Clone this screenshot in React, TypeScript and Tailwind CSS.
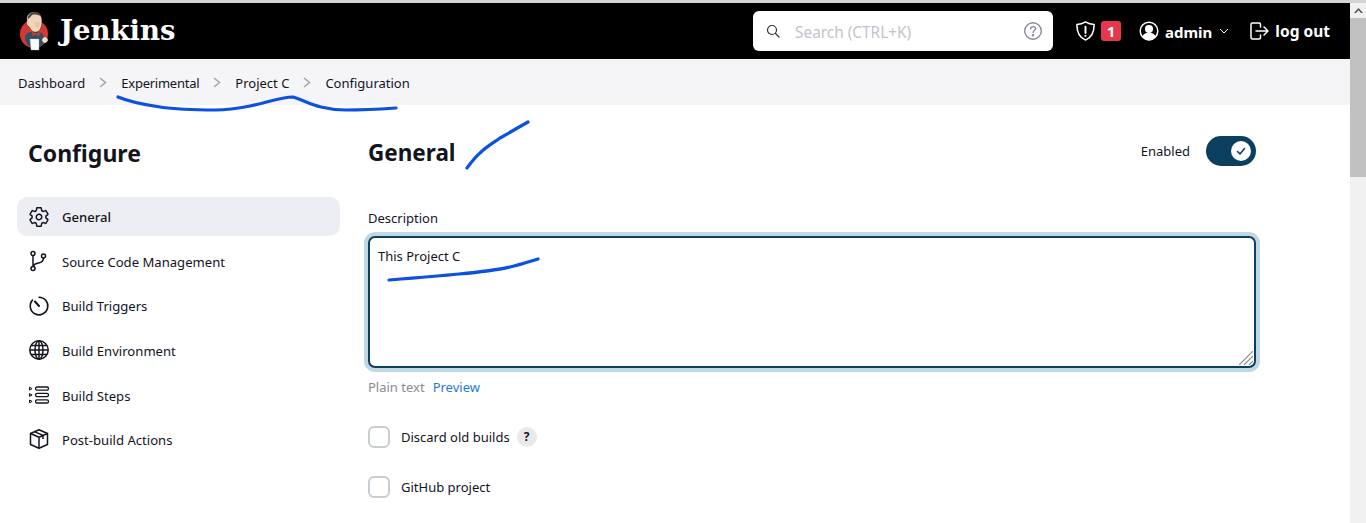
import React from 'react'

const font = { fontFamily: '"Noto Sans", sans-serif' }

function Logo() {
  return (
    <svg width="32" height="40" viewBox="0 0 32 40" className="shrink-0">
      <circle cx="16" cy="23" r="14" fill="#d33833" />
      <path d="M7 26c.5-3 3-5 7-5h6c4 0 6 3 6 7l-1 6-5 3h-6c-4-2-7-6-7-11z" fill="#335061" />
      <path d="M9 9C8 4 12 1 16 1c5 0 8 4 8 9 0 4-1 8-3 10-2 1.500-5 1.500-7 0-1.500-1.500-2-3-3-4.500-2 0-3-3-2-6.500z" fill="#f0d6b7" stroke="#231f20" strokeWidth=".5" />
      <path d="M10 8c-.5-4 3-7 7-7 3 0 5 1 6 4-3-1-6-2-9-1-1 1-2 3-4 4z" fill="#4a4545" />
      <path d="M17 11c2 0 4 .5 5 1-1 3-1.500 4-2.500 5-1.500-1-2.500-3-2.500-6z" fill="#e8c4a0" />
      <path d="M14 21l4 1.500 4-1.500-.5 4-3.500-1.300L14.500 25z" fill="#d33833" />
      <path d="M12 28h9v11h-8z" fill="#fff" stroke="#9aa" strokeWidth=".4" />
      <circle cx="27" cy="29" r="2.300" fill="#f0d6b7" stroke="#fff" />
    </svg>
  )
}

function GearIcon() {
  return (
    <svg width="22" height="22" viewBox="0 0 512 512" fill="none" stroke="currentColor" strokeWidth="34" strokeLinecap="round" strokeLinejoin="round">
      <path d="M262.29 192.31a64 64 0 1057.4 57.4 64.13 64.13 0 00-57.4-57.4zM416.39 256a154.34 154.34 0 01-1.53 20.79l45.21 35.46a10.81 10.81 0 012.45 13.75l-42.77 74a10.81 10.81 0 01-13.14 4.59l-44.9-18.08a16.11 16.11 0 00-15.17 1.75A164.48 164.48 0 01325 400.8a15.94 15.94 0 00-8.82 12.14l-6.73 47.89a11.08 11.08 0 01-10.68 9.17h-85.54a11.11 11.11 0 01-10.69-8.87l-6.72-47.82a16.07 16.07 0 00-9-12.22 155.3 155.3 0 01-21.46-12.57 16 16 0 00-15.11-1.71l-44.89 18.07a10.81 10.81 0 01-13.14-4.58l-42.77-74a10.8 10.8 0 012.45-13.75l38.21-30a16.05 16.05 0 006-14.08c-.36-4.17-.58-8.33-.58-12.5s.21-8.27.58-12.35a16 16 0 00-6.07-13.94l-38.19-30A10.81 10.81 0 0149.48 186l42.77-74a10.81 10.81 0 0113.14-4.59l44.9 18.08a16.11 16.11 0 0015.17-1.75A164.48 164.48 0 01187 111.2a15.94 15.94 0 008.82-12.14l6.73-47.89A11.08 11.08 0 01213.23 42h85.54a11.11 11.11 0 0110.69 8.87l6.72 47.82a16.07 16.07 0 009 12.22 155.3 155.3 0 0121.46 12.57 16 16 0 0015.11 1.71l44.89-18.07a10.81 10.81 0 0113.14 4.58l42.77 74a10.8 10.8 0 01-2.45 13.75l-38.21 30a16.05 16.05 0 00-6.05 14.08c.33 4.14.55 8.3.55 12.47z" />
    </svg>
  )
}

function BranchIcon() {
  return (
    <svg width="22" height="22" viewBox="0 0 22 22" fill="none" stroke="currentColor" strokeWidth="1.500" strokeLinecap="round">
      <circle cx="5" cy="3.500" r="2" />
      <circle cx="5" cy="18.500" r="2" />
      <circle cx="15.500" cy="6" r="2" />
      <path d="M5 5.500v11M15.500 8c0 3-2 4.500-5 5s-4.500 1.500-5.500 3.500" />
    </svg>
  )
}

function TimerIcon() {
  return (
    <svg width="22" height="22" viewBox="0 0 22 22" fill="none" stroke="currentColor" strokeWidth="1.600" strokeLinecap="round">
      <path d="M11 2.200a8.800 8.800 0 11-6.500 2.900" />
      <path d="M7 6.500l4 4.500" strokeWidth="2" />
    </svg>
  )
}

function GlobeIcon() {
  return (
    <svg width="22" height="22" viewBox="0 0 22 22" fill="none" stroke="currentColor" strokeWidth="1.500">
      <circle cx="11" cy="11" r="9.200" />
      <ellipse cx="11" cy="11" rx="4" ry="9.200" />
      <path d="M11 2v18M2 11h18M3.200 6.500h15.600M3.200 15.500h15.600" />
    </svg>
  )
}

function StepsIcon() {
  return (
    <svg width="22" height="22" viewBox="0 0 22 22" fill="none" stroke="currentColor" strokeWidth="1.300">
      <rect x="7.500" y="3" width="13" height="3.200" rx="1.600" />
      <rect x="7.500" y="9.400" width="13" height="3.200" rx="1.600" />
      <rect x="7.500" y="15.800" width="13" height="3.200" rx="1.600" />
      <path d="M1.500 3.200l2.600 1.400-2.600 1.400zM1.500 9.600l2.600 1.400-2.600 1.400zM1.500 16l2.600 1.400-2.600 1.400z" strokeWidth="1" strokeLinejoin="round" />
    </svg>
  )
}

function BoxIcon() {
  return (
    <svg width="22" height="22" viewBox="0 0 22 22" fill="none" stroke="currentColor" strokeWidth="1.500" strokeLinejoin="round">
      <path d="M11 1.800l8.500 3.700v11L11 20.200l-8.500-3.700v-11z" />
      <path d="M2.500 5.500L11 9.200l8.500-3.700M11 9.200v11M6.500 3.600L15 7.400v3.600" />
    </svg>
  )
}

const navItems = [
  { label: 'General', icon: <GearIcon />, active: true },
  { label: 'Source Code Management', icon: <BranchIcon /> },
  { label: 'Build Triggers', icon: <TimerIcon /> },
  { label: 'Build Environment', icon: <GlobeIcon /> },
  { label: 'Build Steps', icon: <StepsIcon /> },
  { label: 'Post-build Actions', icon: <BoxIcon /> },
]

function Chevron() {
  return (
    <svg width="8" height="11" viewBox="0 0 8 11" fill="none" stroke="#a3a3ad" strokeWidth="1.500">
      <path d="M1 1l5.500 4.500L1 10" />
    </svg>
  )
}

function Header() {
  return (
    <header className="flex h-[56px] items-center bg-black pl-[18px] text-white">
      <Logo />
      <span className="ml-[10px] w-[115px] text-[27.500px] leading-none font-bold" style={{ fontFamily: '"DejaVu Serif", serif' }}>
        Jenkins
      </span>
      <div className="ml-[578px] flex h-[40px] w-[300px] items-center rounded-md bg-white pr-[10px] pl-[13px]">
        <svg width="14" height="14" viewBox="0 0 14 14" fill="none" stroke="#333" strokeWidth="1.200" strokeLinecap="round">
          <circle cx="6" cy="6" r="4.500" />
          <path d="M9.500 9.500l3.500 3.500" />
        </svg>
        <span className="ml-[15px] flex-1 pt-[4px] text-[15.400px] text-[#c3c3cc]">Search (CTRL+K)</span>
        <svg width="20" height="20" viewBox="0 0 20 20" fill="none" stroke="#8a8a9a" strokeWidth="1.400">
          <circle cx="10" cy="10" r="8.300" />
          <path d="M7.600 8c0-1.500 1.100-2.400 2.500-2.400s2.400 1 2.400 2.100c0 1.800-2.400 1.900-2.400 3.700" strokeLinecap="round" />
          <circle cx="10" cy="14.200" r=".6" fill="#8a8a9a" />
        </svg>
      </div>
      <svg className="ml-[21px]" width="23" height="24" viewBox="0 0 24 24" fill="none" stroke="#fff" strokeWidth="1.600" strokeLinejoin="round">
        <path d="M12 2.500c3 1.800 6 2.600 9 2.800 0 8-2 13.500-9 16.200C5 18.800 3 13.300 3 5.300c3-.2 6-1 9-2.800z" />
        <path d="M12 7.500v6.500" strokeWidth="2" strokeLinecap="round" />
        <circle cx="12" cy="17" r="1.100" fill="#fff" stroke="none" />
      </svg>
      <span className="ml-[4px] flex h-[20px] w-[20px] items-center justify-center rounded-[3px] bg-[#e6374d] text-[15px] font-bold">1</span>
      <svg className="ml-[18px]" width="20" height="20" viewBox="0 0 20 20" fill="none" stroke="#fff" strokeWidth="1.500">
        <circle cx="10" cy="10" r="8.800" />
        <circle cx="10" cy="8" r="3.300" fill="#fff" />
        <path d="M4 15.500c1.500-2.500 3.500-3 6-3s4.500.5 6 3c-1.500 2-3.500 3.300-6 3.300s-4.500-1.300-6-3.300z" fill="#fff" />
      </svg>
      <span className="ml-[6px] pt-[2px] text-[15px] font-bold">admin</span>
      <svg className="ml-[7px]" width="10" height="10" viewBox="0 0 10 10" fill="none" stroke="#fff" strokeWidth="1">
        <path d="M1 3l4 4 4-4" />
      </svg>
      <svg className="ml-[20px]" width="20" height="20" viewBox="0 0 20 20" fill="none" stroke="#fff" strokeWidth="1.500" strokeLinecap="round" strokeLinejoin="round">
        <path d="M11.500 6V3.500a1.500 1.500 0 00-1.500-1.500H3.500A1.500 1.500 0 002 3.500v13A1.500 1.500 0 003.500 18H10a1.500 1.500 0 001.500-1.500V14" />
        <path d="M7 10h12M15 6l4 4-4 4" />
      </svg>
      <span className="ml-[6px] pt-[2px] text-[15.500px] font-bold">log out</span>
    </header>
  )
}

function Breadcrumbs() {
  const crumbs = ['Dashboard', 'Experimental', 'Project C', 'Configuration']
  return (
    <nav className="flex h-[46px] items-center gap-[14px] bg-[#f5f5f7] pl-[18px] text-[13px] text-[#14141f]">
      {crumbs.map((c, i) => (
        <React.Fragment key={c}>
          {i > 0 && <Chevron />}
          <span className={`pt-[4px] ${c === 'Experimental' ? 'tracking-[-0.25px]' : ''}`}>{c}</span>
        </React.Fragment>
      ))}
    </nav>
  )
}

function Sidebar() {
  return (
    <aside className="w-[340px] shrink-0 pt-[31px] pl-[17px]">
      <h1 className="pl-[11px] text-[23px] leading-[34px] font-bold text-[#14141f]">Configure</h1>
      <ul className="mt-[27px] flex flex-col gap-[5.600px]">
        {navItems.map(item => (
          <li
            key={item.label}
            className={`flex h-[39px] items-center gap-[12px] rounded-[10px] pl-[11px] text-[13.100px] text-[#14141f] ${item.active ? 'bg-[#edeef3] font-medium' : ''}`}
          >
            {item.icon}
            <span className="pt-[3px]">{item.label}</span>
          </li>
        ))}
      </ul>
    </aside>
  )
}

function Checkbox({ label, help }: { label: string; help?: boolean }) {
  return (
    <label className="flex items-center text-[13px] text-[#14141f]">
      <span className="h-[22px] w-[22px] rounded-[6px] border-2 border-[#c6ced3] bg-white" />
      <span className="ml-[11px] pt-[2px]">{label}</span>
      {help && (
        <span className="ml-[7px] flex h-[20px] w-[20px] items-center justify-center rounded-full bg-[#e9e9ec] text-[12px] font-bold">?</span>
      )}
    </label>
  )
}

function General() {
  return (
    <main className="ml-[28px] w-[888px] pt-[31px]">
      <div className="flex items-start justify-between">
        <h2 className="pt-[1px] text-[22.500px] leading-[32px] font-bold text-[#14141f]">General</h2>
        <div className="flex items-center gap-[16px] text-[13px] text-[#14141f]">
          <span className="pt-[2px]">Enabled</span>
          <span className="flex h-[30px] w-[50px] items-center justify-end rounded-full bg-[#0b3f5f] pr-[5px]">
            <span className="flex h-[20px] w-[20px] items-center justify-center rounded-full bg-white">
              <svg width="12" height="12" viewBox="0 0 12 12" fill="none" stroke="#0b3f5f" strokeWidth="1.600" strokeLinecap="round" strokeLinejoin="round">
                <path d="M2.500 6.500l2.500 2.500 4.500-5.500" />
              </svg>
            </span>
          </span>
        </div>
      </div>
      <div className="mt-[39px] text-[13px] leading-[20px] text-[#14141f]">Description</div>
      <div className="relative mt-[8px]">
        <textarea
          readOnly
          defaultValue="This Project C"
          className="block h-[132px] w-full resize-none rounded-[7px] border-2 border-[#0b3f5f] bg-white px-[8px] pt-[8px] pb-[6px] text-[13px] leading-[20px] text-[#14141f] shadow-[0_0_0_4px_#c0d7e6] outline-none"
          style={font}
        />
        <svg className="absolute right-[3px] bottom-[3px]" width="14" height="14" viewBox="0 0 14 14" stroke="#8c8c8c" strokeWidth="1.200">
          <path d="M0 14L14 0M5 14l9-9M10 14l4-4" />
        </svg>
      </div>
      <div className="mt-[9px] flex gap-[8px] text-[13px] leading-[20px]">
        <span className="text-[#8a8a96]">Plain text</span>
        <span className="text-[#1f78e0]">Preview</span>
      </div>
      <div className="mt-[29px] flex flex-col gap-[28px]">
        <Checkbox label="Discard old builds" help />
        <Checkbox label="GitHub project" />
      </div>
    </main>
  )
}

function Scribbles() {
  return (
    <svg className="pointer-events-none absolute top-0 left-0" width="1366" height="523" fill="none" stroke="#0b52e0" strokeWidth="3.200" strokeLinecap="round" strokeLinejoin="round">
      <path d="M118 97c12 5 28 8 42 10 20 3 38 3 55 3 15 0 25-2 35-4 16-3 30-9 43-9 10 3 18 8 28 10 8 2 17 3 25 3 20 0 35-1 50-2" />
      <path d="M467 168c3-4 8-11 13-15 6-6 13-10 20-15 9-5 19-11 28-16" />
      <path d="M389 280c25-2 50-4 70-6 22-2 40-4 55-8 9-2 17-5 24-7" />
    </svg>
  )
}

export default function App() {
  return (
    <div className="relative flex h-[523px] w-[1366px] overflow-hidden bg-white" style={font}>
      <div className="min-w-0 flex-1 pt-[3px]">
        <Header />
        <Breadcrumbs />
        <div className="flex">
          <Sidebar />
          <General />
        </div>
      </div>
      <div className="mt-[3px] flex w-[16px] shrink-0 flex-col bg-[#f1f1f1]">
        <div className="flex h-[15px] items-center justify-center">
          <svg width="9" height="6" viewBox="0 0 9 6"><path d="M4.500 0L9 5H7L4.500 2.200 2 5H0z" fill="#505050" /></svg>
        </div>
        <div className="h-[159px] bg-[#c1c1c1]" />
      </div>
      <div className="absolute top-0 left-0 h-[3px] w-full bg-[#d4d4d4]" />
      <Scribbles />
    </div>
  )
}
